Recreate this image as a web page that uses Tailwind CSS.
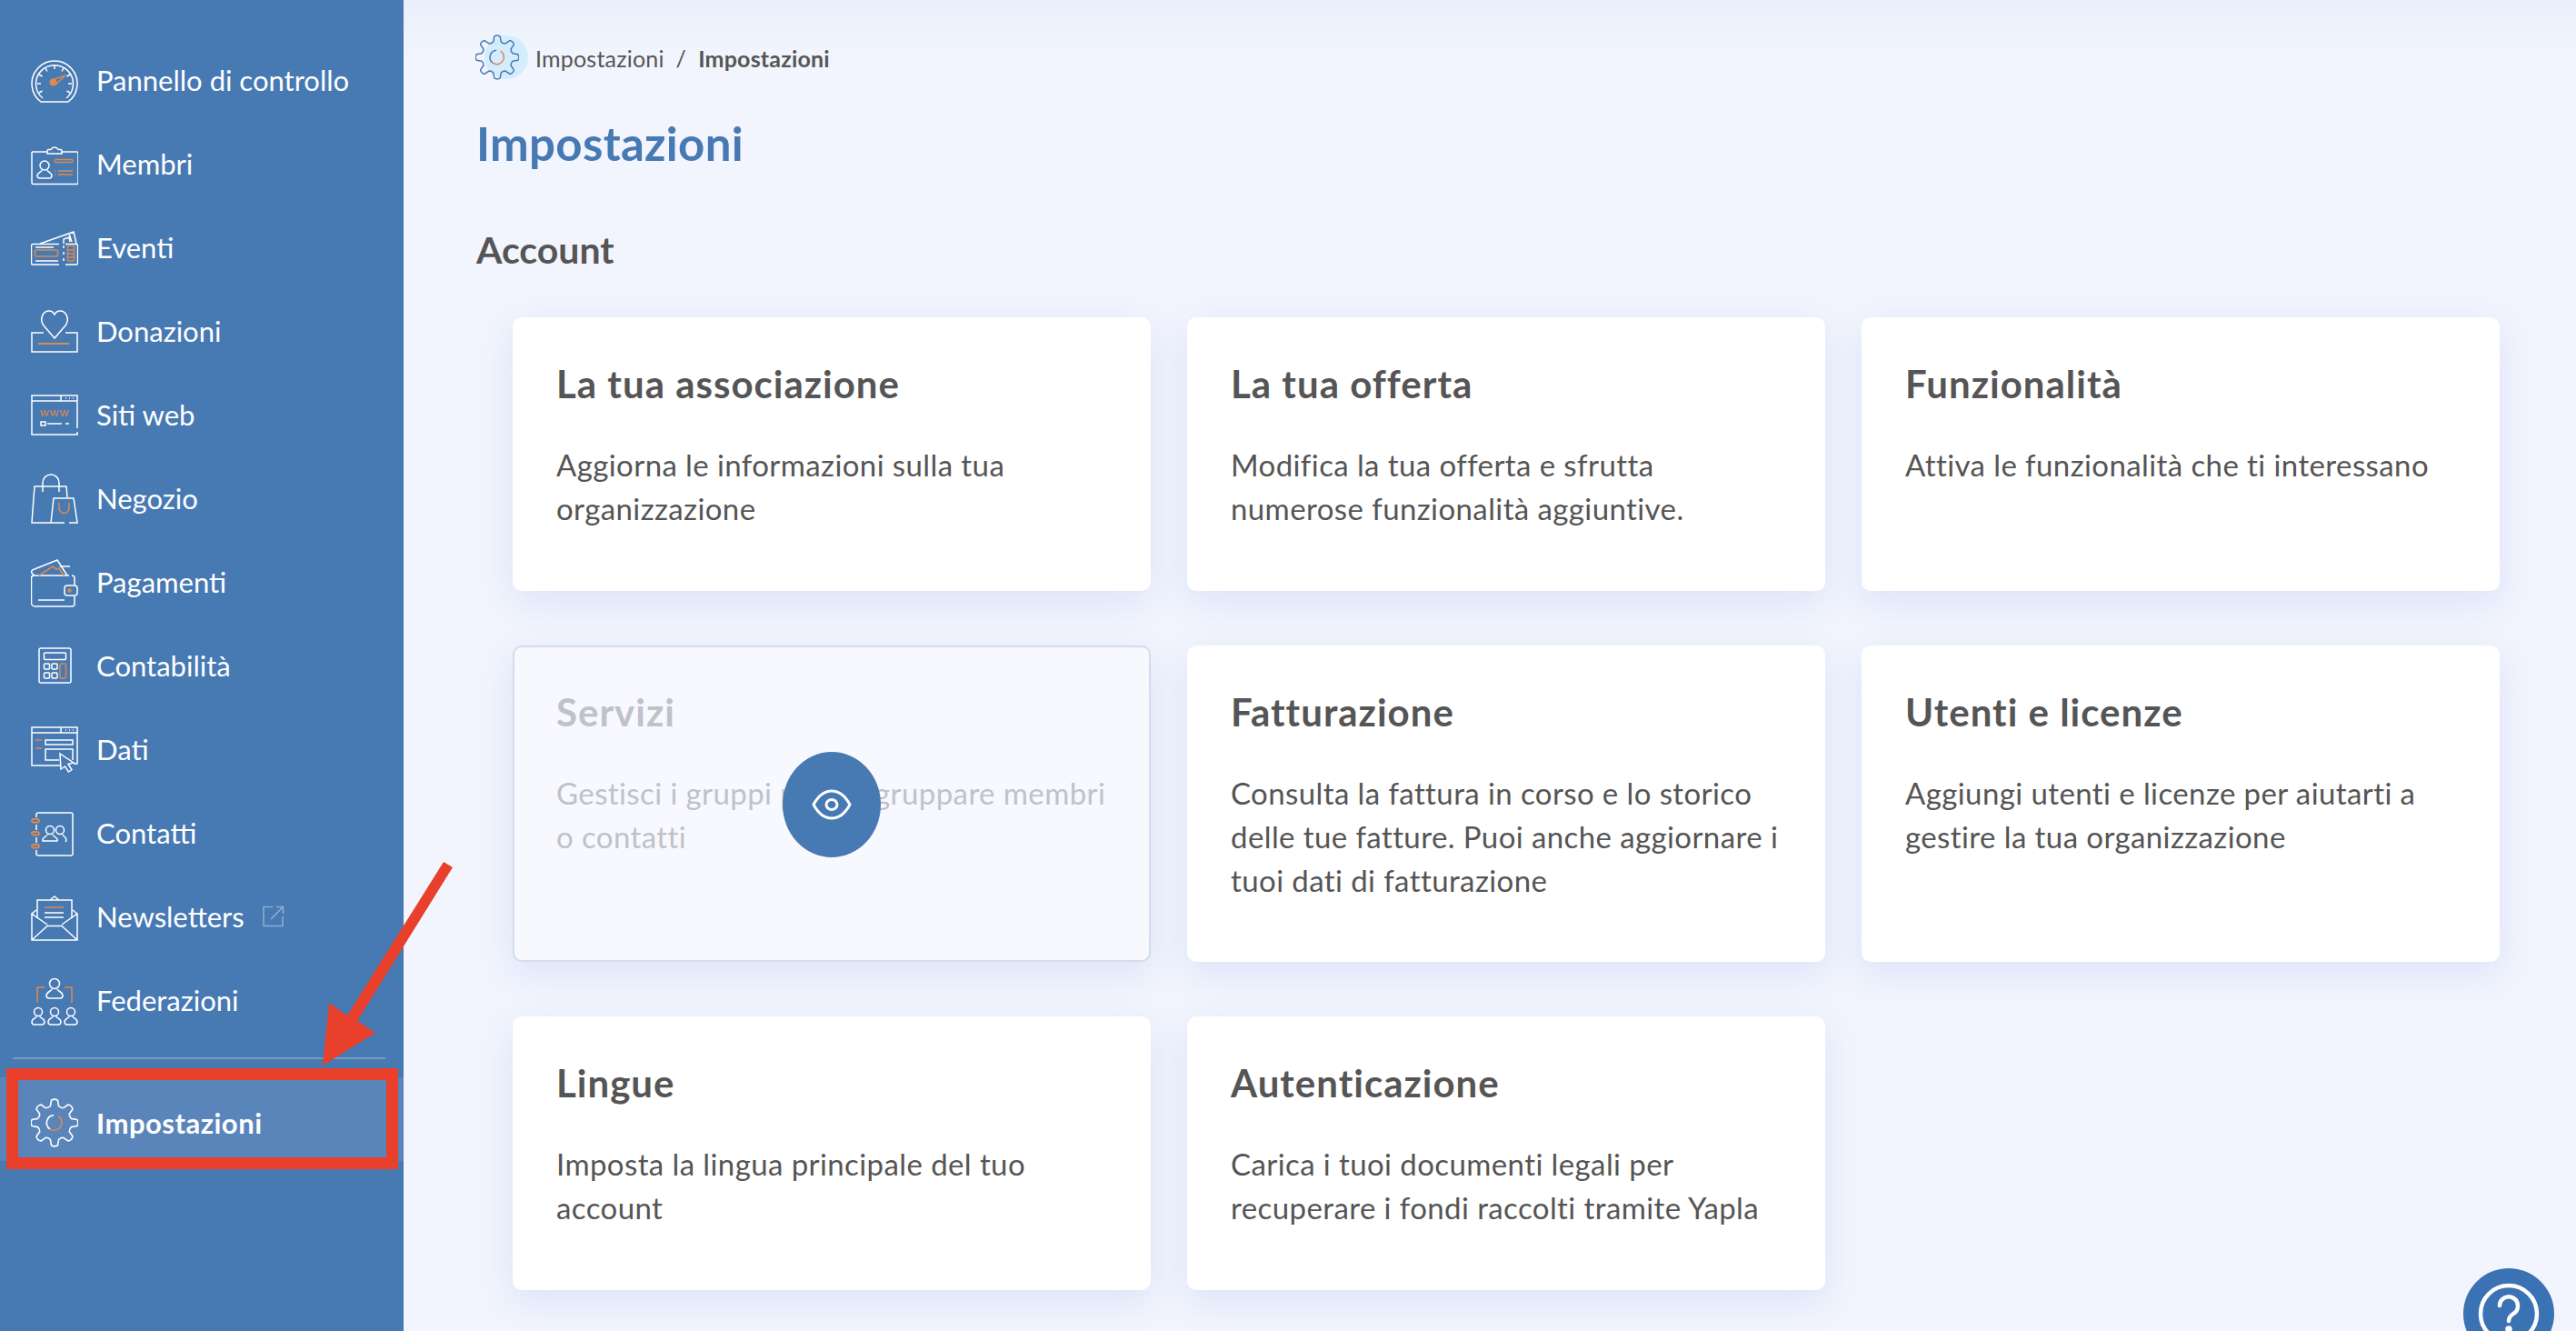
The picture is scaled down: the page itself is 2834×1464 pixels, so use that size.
<!DOCTYPE html>
<html lang="it">
<head>
    <meta charset="UTF-8" />
    <title>Impostazioni</title>
    <script src="https://cdn.jsdelivr.net/npm/@tailwindcss/browser@4"></script>
</head>
<body class="bg-[#f2f5fd] text-[#555555] font-['Lato',sans-serif] h-screen overflow-hidden">

<svg class="hidden">
    <symbol id="gear" viewBox="0 0 52 56" overflow="visible">
        <path transform="translate(26 28)" fill="none" stroke-width="1.6" stroke-linejoin="round" d="M18.44 -4.6 L24.76 -3.48 Q27 0 24.76 3.48 L18.44 4.6 Q16.17 6.7 16.29 9.79 L19.97 15.05 Q19.09 19.09 15.05 19.97 L9.79 16.29 Q6.7 16.17 4.6 18.44 L3.48 24.76 Q0 27 -3.48 24.76 L-4.6 18.44 Q-6.7 16.17 -9.79 16.29 L-15.05 19.97 Q-19.09 19.09 -19.97 15.05 L-16.29 9.79 Q-16.17 6.7 -18.44 4.6 L-24.76 3.48 Q-27 0 -24.76 -3.48 L-18.44 -4.6 Q-16.17 -6.7 -16.29 -9.79 L-19.97 -15.05 Q-19.09 -19.09 -15.05 -19.97 L-9.79 -16.29 Q-6.7 -16.17 -4.6 -18.44 L-3.48 -24.76 Q0 -27 3.48 -24.76 L4.6 -18.44 Q6.7 -16.17 9.79 -16.29 L15.05 -19.97 Q19.09 -19.09 19.97 -15.05 L16.29 -9.79 Q16.17 -6.7 18.44 -4.6 Z"/>
        <path fill="none" stroke-width="1.6" d="M21 35 A8.5 8.5 0 0 1 25 19.6"/>
        <path fill="none" stroke="#dd8a4e" stroke-width="1.6" d="M30 20.5 A8.5 8.5 0 0 1 21 35"/>
    </symbol>
</svg>

<div class="flex h-screen">

    <!-- Sidebar -->
    <aside class="w-[444px] shrink-0 bg-[#4779b3] text-white pt-[42px] text-[31px] flex flex-col">
        <a class="h-[92px] pl-[34px] flex items-center gap-[20px]">
            <svg class="w-[52px] h-[56px]" viewBox="0 0 52 56" fill="none" stroke="#fff" stroke-width="1.5">
                <path d="M11 52 A25 25 0 1 1 41 52 Z"/>
                <path d="M13 48 A20.5 20.5 0 1 1 39 48"/>
                <path d="M26 12v4M16 15l2 3.500M36 15l-2 3.500M9 22l3.500 2M43 22l-3.500 2M7 32h4M45 32h-4M9 42l3.500-2M43 42l-3.500-2"/>
                <path stroke="#dd8a4e" d="M23 28 L38 23 L27 33"/>
                <circle cx="24.500" cy="30.500" r="3.200" fill="#dd8a4e" stroke="#dd8a4e"/>
            </svg>
            <span>Pannello di controllo</span>
        </a>
        <a class="h-[92px] pl-[34px] flex items-center gap-[20px]">
            <svg class="w-[52px] h-[56px]" viewBox="0 0 52 56" fill="none" stroke="#fff" stroke-width="1.5">
                <path d="M18 15H2a1.500 1.500 0 0 0-1 1.500V49a1.500 1.500 0 0 0 1.500 1.500h48A1.500 1.500 0 0 0 52 49V16.500A1.500 1.500 0 0 0 50.500 15H34"/>
                <path d="M18 17v-3a1.500 1.500 0 0 1 1.500-1.500H22a4.500 4.500 0 0 1 8 0h2.500A1.500 1.500 0 0 1 34 14v3Z"/>
                <circle cx="15" cy="30" r="5"/>
                <path d="M12 35c0 2-5 3-5 6 0 2 1 3 3 3h10c2 0 3-1 3-3 0-3-5-4-5-6"/>
                <g stroke="#dd8a4e">
                    <rect x="26" y="23.500" width="20" height="3" rx="1.500"/>
                    <path d="M30 36h16M30 40h16M26 36h1.500M26 40h1.500"/>
                </g>
            </svg>
            <span>Membri</span>
        </a>
        <a class="h-[92px] pl-[34px] flex items-center gap-[20px]">
            <svg class="w-[52px] h-[56px]" viewBox="0 0 52 56" fill="none" stroke="#fff" stroke-width="1.5">
                <path d="M10 24 L47 11 L50 24M36 15l6-2 3 9M36 24v-5l6-2 1 5"/>
                <path d="M31 47H2a1.500 1.500 0 0 1-1.500-1.500V26A1.500 1.500 0 0 1 2 24.500h29M38 47h12a1.500 1.500 0 0 0 1.500-1.500V26A1.500 1.500 0 0 0 50 24.500H38"/>
                <path d="M36 26v3M36 33v3M36 40v3M5 43h25M5 28h20"/>
                <g stroke="#dd8a4e">
                    <rect x="4.500" y="31" width="25" height="7" rx="1"/>
                    <rect x="40.500" y="26" width="7" height="17" rx="1"/>
                    <path d="M41 31h6M41 35h6M41 39h6"/>
                </g>
            </svg>
            <span>Eventi</span>
        </a>
        <a class="h-[92px] pl-[34px] flex items-center gap-[20px]">
            <svg class="w-[52px] h-[56px]" viewBox="0 0 52 56" fill="none" stroke="#fff" stroke-width="1.5">
                <path d="M26 36 L14 22 C9 15 13 6 20 6 C23 6 25 8 26 10 C27 8 29 6 32 6 C39 6 43 15 38 22 Z"/>
                <path d="M14 30H1v21h50V30H38"/>
                <path stroke="#dd8a4e" stroke-width="1.800" d="M8 42h34"/>
            </svg>
            <span>Donazioni</span>
        </a>
        <a class="h-[92px] pl-[34px] flex items-center gap-[20px]">
            <svg class="w-[52px] h-[56px]" viewBox="0 0 52 56" fill="none" stroke="#fff" stroke-width="1.5">
                <path d="M51 43V7H1v43h50v-3M1 13h50M33 7v6M38 10h1M42 10h1M46 10h1"/>
                <text x="26" y="30" text-anchor="middle" font-size="13" font-family="Lato" fill="#dd8a4e" stroke="none" letter-spacing="0.600">www</text>
                <rect x="11" y="36" width="5" height="4"/>
                <path d="M18 38h16M38 38h4"/>
            </svg>
            <span>Siti web</span>
        </a>
        <a class="h-[92px] pl-[34px] flex items-center gap-[20px]">
            <svg class="w-[52px] h-[56px]" viewBox="0 0 52 56" fill="none" stroke="#fff" stroke-width="1.5">
                <path d="M22 55H1L4 15h35l1 12M13 21V11a9 9 0 0 1 18 0v10"/>
                <path d="M22 55l3-27h22l4 27h-9M37 55h-15"/>
                <path stroke="#dd8a4e" d="M31 33v6a5.500 5.500 0 0 0 11 0v-6"/>
            </svg>
            <span>Negozio</span>
        </a>
        <a class="h-[92px] pl-[34px] flex items-center gap-[20px]">
            <svg class="w-[52px] h-[56px]" viewBox="0 0 52 56" fill="none" stroke="#fff" stroke-width="1.5">
                <path d="M42 21H3.500A3 3 0 0 0 .5 24v27a4 4 0 0 0 4 4H45a3 3 0 0 0 3-3v-8M48 32v-8a3 3 0 0 0-3-3"/>
                <path d="M4 21C-1 18 0 15 4 14L29 4L40 21M32 11h11"/>
                <path stroke="#dd8a4e" stroke-width="1.800" d="M9 21L24 11L28 14L31 13L36 21"/>
                <rect x="37" y="32" width="14" height="11" rx="3"/>
                <circle cx="42.500" cy="37.500" r="2.200" fill="#dd8a4e" stroke="none"/>
                <path d="M8 48h29"/>
            </svg>
            <span>Pagamenti</span>
        </a>
        <a class="h-[92px] pl-[34px] flex items-center gap-[20px]">
            <svg class="w-[52px] h-[56px]" viewBox="0 0 52 56" fill="none" stroke="#fff" stroke-width="1.5">
                <rect x="9" y="9" width="35" height="38" rx="2"/>
                <rect x="14.500" y="14" width="24" height="7.500" rx="1"/>
                <rect x="14.500" y="26" width="6" height="6" rx="1"/>
                <rect x="23" y="26" width="6" height="6" rx="1"/>
                <rect x="14.500" y="36" width="6" height="6" rx="1"/>
                <rect x="23" y="36" width="6" height="6" rx="1"/>
                <rect x="32" y="26" width="6.500" height="16" rx="1.500" stroke="#dd8a4e"/>
            </svg>
            <span>Contabilità</span>
        </a>
        <a class="h-[92px] pl-[34px] flex items-center gap-[20px]">
            <svg class="w-[52px] h-[56px]" viewBox="0 0 52 56" fill="none" stroke="#fff" stroke-width="1.5">
                <path d="M32 46H1V4h50v40h-4M1 10h50M33 4v6M38 7h1M42 7h1M46 7h1"/>
                <rect x="16" y="18" width="30" height="5"/>
                <path d="M31 40H16V28h30v12"/>
                <path fill="#4779b3" d="M32 33L47 43L41 44.500L45 50.500L41.500 53L37.500 47L33 50Z"/>
                <path stroke="#dd8a4e" d="M5 18h7M5 27h7"/>
            </svg>
            <span>Dati</span>
        </a>
        <a class="h-[92px] pl-[34px] flex items-center gap-[20px]">
            <svg class="w-[52px] h-[56px]" viewBox="0 0 52 56" fill="none" stroke="#fff" stroke-width="1.5">
                <path d="M6 11V8a2 2 0 0 1 2-2h36a2 2 0 0 1 2 2v43a2 2 0 0 1-2 2H8a2 2 0 0 1-2-2v-4M6 19v6M6 33v6"/>
                <circle cx="21" cy="25" r="4.500"/>
                <circle cx="32" cy="25" r="4.500"/>
                <path d="M18 30c-1 2-4 3-5 5v2h16v-2c-1-2-4-3-5-5M35 30c1 2 4 3 4 6l-1 2"/>
                <g stroke="#dd8a4e" stroke-width="1.800">
                    <rect x="1" y="13" width="8" height="3.500" rx="1.750"/>
                    <rect x="1" y="27" width="8" height="3.500" rx="1.750"/>
                    <rect x="1" y="41" width="8" height="3.500" rx="1.750"/>
                </g>
            </svg>
            <span>Contatti</span>
        </a>
        <a class="h-[92px] pl-[34px] flex items-center gap-[20px]">
            <svg class="w-[52px] h-[56px]" viewBox="0 0 52 56" fill="none" stroke="#fff" stroke-width="1.5">
                <path d="M1 25V54H51V25L46 21M6 21L1 25L18 37M51 25L34 37M1 54L18 38.500H34L51 54"/>
                <path d="M7 30V10H45V30M21 10L26 6L31 10"/>
                <path stroke="#dd8a4e" d="M15 18h21"/>
                <path d="M15 24h21M15 29h21"/>
            </svg>
            <span>Newsletters</span>
            <svg class="w-[24px] h-[24px]" viewBox="0 0 24 24" fill="none" stroke="#fff" stroke-opacity="0.4" stroke-width="1.500">
                <path d="M11 1.500H1v21h21V12M9 15L22 2M15 1.500h7.500V9"/>
            </svg>
        </a>
        <a class="h-[92px] pl-[34px] flex items-center gap-[20px]">
            <svg class="w-[52px] h-[56px]" viewBox="0 0 52 56" fill="none" stroke="#fff" stroke-width="1.5">
                <circle cx="26" cy="10" r="5.500"/>
                <path d="M23 16c0 2-6 3-6 7 0 2 1 3 3 3h12c2 0 3-1 3-3 0-4-6-5-6-7"/>
                <path stroke="#dd8a4e" d="M7 31V14h8M45 31V14h-8"/>
                <circle cx="8" cy="41" r="4.500"/>
                <circle cx="26" cy="41" r="4.500"/>
                <circle cx="44" cy="41" r="4.500"/>
                <path d="M6 46c0 2-5 2-5 6 0 2 1 3 3 3h8c2 0 3-1 3-3 0-4-5-4-5-6M24 46c0 2-5 2-5 6 0 2 1 3 3 3h8c2 0 3-1 3-3 0-4-5-4-5-6M42 46c0 2-5 2-5 6 0 2 1 3 3 3h8c2 0 3-1 3-3 0-4-5-4-5-6"/>
            </svg>
            <span>Federazioni</span>
        </a>

        <div class="h-[2px] ml-[14px] mr-[20px] mt-[17px] bg-white/25"></div>

        <a class="h-[92px] mt-[20px] pt-[8px] pl-[34px] flex items-center gap-[20px] bg-[#5a85bb] font-bold tracking-[0.5px]">
            <svg class="w-[52px] h-[56px]" stroke="#fff"><use href="#gear"/></svg>
            <span>Impostazioni</span>
        </a>
    </aside>

    <!-- Main -->
    <main class="flex-1 pt-[41px] pl-[80px] bg-[linear-gradient(to_bottom,#e9effb,#f2f5fd_60px)]">
        <div class="h-[48px] flex items-center text-[25px] tracking-[0.2px] -ml-[1px]">
            <div class="relative w-[66px] h-[48px]">
                <div class="absolute left-[10px] top-[-2px] w-[48px] h-[48px] rounded-full bg-[#d3edfc]"></div>
                <svg class="absolute left-0 top-[-4px] w-[48px] h-[52px]" viewBox="0 0 52 56" stroke="#4779b3"><use href="#gear"/></svg>
            </div>
            <span>Impostazioni</span>
            <span class="mx-[13px]">/</span>
            <span class="font-bold">Impostazioni</span>
        </div>

        <h1 class="h-[60px] mt-[39px] text-[51px] leading-[60px] font-bold tracking-[0.3px] text-[#4779b3]">Impostazioni</h1>
        <h2 class="h-[50px] mt-[62px] text-[41px] leading-[50px] font-bold">Account</h2>

        <div class="mt-[49px] ml-[40px] w-[2186px] grid grid-cols-3 grid-rows-[301px_348px_301px] gap-x-[40px] gap-y-[60px]">
            <div class="bg-white rounded-[10px] px-[48px] pt-[43px] shadow-[0_12px_40px_rgba(60,90,220,0.12)]">
                <h3 class="text-[42px] leading-[60px] font-bold tracking-[1px]">La tua associazione</h3>
                <p class="mt-[35px] text-[33px] leading-[48px] tracking-[0.4px]">Aggiorna le informazioni sulla tua organizzazione</p>
            </div>
            <div class="bg-white rounded-[10px] px-[48px] pt-[43px] shadow-[0_12px_40px_rgba(60,90,220,0.12)]">
                <h3 class="text-[42px] leading-[60px] font-bold tracking-[1px]">La tua offerta</h3>
                <p class="mt-[35px] text-[33px] leading-[48px] tracking-[0.4px]">Modifica la tua offerta e sfrutta numerose funzionalità aggiuntive.</p>
            </div>
            <div class="bg-white rounded-[10px] px-[48px] pt-[43px] shadow-[0_12px_40px_rgba(60,90,220,0.12)]">
                <h3 class="text-[42px] leading-[60px] font-bold tracking-[1px]">Funzionalità</h3>
                <p class="mt-[35px] text-[33px] leading-[48px] tracking-[0.4px]">Attiva le funzionalità che ti interessano</p>
            </div>

            <div class="relative bg-[#f7f9fe] border-2 border-[#d5dcec] rounded-[10px] px-[46px] pt-[41px] text-[#bfc2c9] shadow-[0_12px_40px_rgba(60,90,220,0.12)]">
                <h3 class="text-[42px] leading-[60px] font-bold tracking-[1px]">Servizi</h3>
                <p class="mt-[35px] text-[33px] leading-[48px] tracking-[0.4px]">Gestisci i gruppi per raggruppare membri o contatti</p>
                <div class="absolute left-[295px] top-[115px] w-[108px] h-[116px] rounded-[50%] bg-[#4779b3] flex items-center justify-center">
                    <svg class="w-[44px] h-[34px]" viewBox="0 0 44 34" fill="none" stroke="#fff" stroke-width="3">
                        <path d="M2 17C8 6 15 2 22 2s14 4 20 15c-6 11-13 15-20 15S8 28 2 17Z"/>
                        <ellipse cx="22" cy="17" rx="6" ry="5.500"/>
                    </svg>
                </div>
            </div>
            <div class="bg-white rounded-[10px] px-[48px] pt-[43px] shadow-[0_12px_40px_rgba(60,90,220,0.12)]">
                <h3 class="text-[42px] leading-[60px] font-bold tracking-[1px]">Fatturazione</h3>
                <p class="mt-[35px] text-[33px] leading-[48px] tracking-[0.4px]">Consulta la fattura in corso e lo storico delle tue fatture. Puoi anche aggiornare i tuoi dati di fatturazione</p>
            </div>
            <div class="bg-white rounded-[10px] px-[48px] pt-[43px] shadow-[0_12px_40px_rgba(60,90,220,0.12)]">
                <h3 class="text-[42px] leading-[60px] font-bold tracking-[1px]">Utenti e licenze</h3>
                <p class="mt-[35px] text-[33px] leading-[48px] tracking-[0.4px]">Aggiungi utenti e licenze per aiutarti a gestire la tua organizzazione</p>
            </div>

            <div class="bg-white rounded-[10px] px-[48px] pt-[43px] shadow-[0_12px_40px_rgba(60,90,220,0.12)]">
                <h3 class="text-[42px] leading-[60px] font-bold tracking-[1px]">Lingue</h3>
                <p class="mt-[35px] text-[33px] leading-[48px] tracking-[0.4px]">Imposta la lingua principale del tuo account</p>
            </div>
            <div class="bg-white rounded-[10px] px-[48px] pt-[43px] shadow-[0_12px_40px_rgba(60,90,220,0.12)]">
                <h3 class="text-[42px] leading-[60px] font-bold tracking-[1px]">Autenticazione</h3>
                <p class="mt-[35px] text-[33px] leading-[48px] tracking-[0.4px]">Carica i tuoi documenti legali per recuperare i fondi raccolti tramite Yapla</p>
            </div>
        </div>
    </main>
</div>

<!-- help button -->
<div class="fixed left-[2710px] top-[1395px] w-[100px] h-[100px] rounded-full bg-[#3b72b3] flex items-center justify-center">
    <svg class="w-[68px] h-[68px]" viewBox="0 0 68 68" fill="none" stroke="#fff" stroke-width="4.500" stroke-linecap="round">
        <circle cx="34" cy="34" r="31"/>
        <path d="M24 25a10 10 0 1 1 15 9c-3 2-5 4-5 8"/>
        <circle cx="34" cy="51" r="1.500" fill="#fff"/>
    </svg>
</div>

<!-- annotation -->
<div class="absolute left-[7px] top-[1175px] w-[431px] h-[111px] border-[13px] border-[#e8402a]"></div>
<svg class="absolute left-0 top-0 w-[520px] h-[1300px]" viewBox="0 0 520 1300">
    <polygon fill="#e8402a" points="488,948 498,954 393,1123 413,1136 355,1172 362,1103 382,1117"/>
</svg>

</body>
</html>
